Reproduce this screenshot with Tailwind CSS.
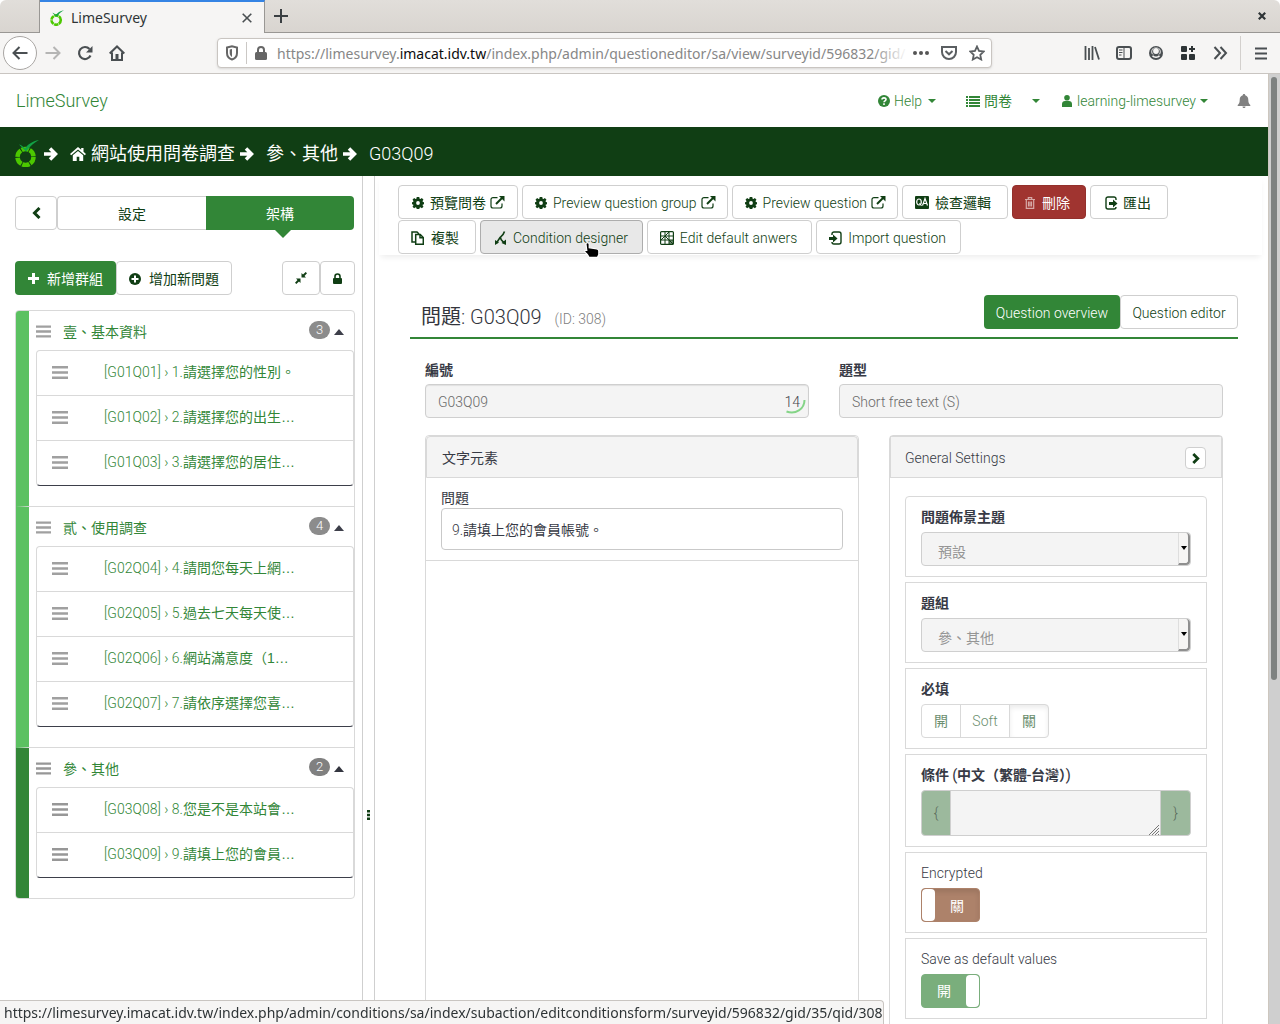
<!DOCTYPE html>
<html lang="zh-Hant">
<head>
<meta charset="utf-8">
<title>LimeSurvey</title>
<script src="https://cdn.jsdelivr.net/npm/@tailwindcss/browser@4"></script>
</head>
<body class="bg-white font-['Roboto_Light','Roboto','Noto_Sans_CJK_TC',sans-serif] text-sm leading-5 text-[#373a45]">

<svg class="hidden" aria-hidden="true">
  <symbol id="lime" viewBox="0 0 24 27">
    <circle cx="10.500" cy="17" r="8" fill="none" stroke="#4cc800" stroke-width="4.500" stroke-dasharray="7.400 0.970"/>
    <path d="M4 4.500c2.500.5 4 2 6 4C13 4 17 1.500 24 0c-5 2.500-9 6.500-13 11.500C8.500 9 6.500 7 4 4.500z" fill="#12a346"/>
  </symbol>
  <symbol id="arrow" viewBox="0 0 14 14"><path d="M0 7h11M6 1.500 11.500 7 6 12.500" fill="none" stroke="currentColor" stroke-width="3.500"/></symbol>
  <symbol id="home" viewBox="0 0 16 14"><path d="M8 0 0 7l1.200 1.300L8 2.500l6.800 5.800L16 7l-2.500-2.200V1h-2.300v1.800zM2.800 8.300V14h3.900V9.800h2.600V14h3.900V8.300L8 4z" fill="currentColor"/></symbol>
  <symbol id="bars" viewBox="0 0 16 13"><path d="M0 0h16v2.500H0zM0 5.200h16v2.600H0zM0 10.500h16V13H0z" fill="currentColor"/></symbol>
  <symbol id="gear" viewBox="0 0 14 14"><path fill="currentColor" fill-rule="evenodd" d="M5.500 0h3l.4 1.900 1 .4L11.500 1.200l1.900 1.900-1.100 1.600.4 1 1.300.3v2.400l-1.300.3-.4 1 1.100 1.600-1.900 1.900-1.600-1.100-1 .4-.4 1.500h-3l-.4-1.500-1-.4-1.600 1.100-1.900-1.900 1.100-1.600-.4-1L0 8.400V6l1.300-.3.4-1L.6 3.100l1.900-1.900 1.600 1.100 1-.4zM7 4.800a2.200 2.200 0 1 0 0 4.400 2.200 2.200 0 0 0 0-4.400z"/></symbol>
  <symbol id="ext" viewBox="0 0 15 13"><path d="M7.500 1.600H3a2 2 0 0 0-2 2V10a2 2 0 0 0 2 2h7a2 2 0 0 0 2-2V7.500" fill="none" stroke="currentColor" stroke-width="1.200"/><path d="M6 8 12.500 1.500" stroke="currentColor" stroke-width="2"/><path d="M9 0h5.500v5.500z" fill="currentColor"/></symbol>
  <symbol id="tri" viewBox="0 0 8 4"><path d="M0 0h8L4 4z" fill="currentColor"/></symbol>
</svg>

<div class="flex h-screen flex-col overflow-hidden">
  <!-- browser tab strip -->
  <div class="flex h-[33px] shrink-0 rounded-t-md border-b border-[#999794] bg-linear-to-b from-[#e1deda] to-[#d9d5d0] font-['Noto_Sans',sans-serif] text-sm text-[#2e3436]">
    <div class="w-10 border-r border-[#999794]"></div>
    <div class="-mb-px flex w-[225px] items-center border-t-2 border-r border-t-[#3584e4] border-r-[#999794] bg-[#f6f5f4] pr-3 pl-[10px]">
      <svg class="h-4 w-[14px]"><use href="#lime"/></svg>
      <span class="ml-[7px]">LimeSurvey</span>
      <button class="ml-auto" aria-label="關閉分頁"><svg class="size-[10px]" viewBox="0 0 10 10"><path d="m.7.7 8.600 8.600M9.300.7.7 9.300" stroke="#4a4f52" stroke-width="1.600"/></svg></button>
    </div>
    <button class="ml-[9px]" aria-label="新分頁"><svg class="size-[14px]" viewBox="0 0 14 14"><path d="M7 0v14M0 7h14" stroke="#3a3f42" stroke-width="2"/></svg></button>
    <button class="mr-[14px] ml-auto" aria-label="關閉"><svg class="size-2" viewBox="0 0 8 8"><path d="m.8.8 6.400 6.400M7.200.8.8 7.200" stroke="#2e3436" stroke-width="2.200"/></svg></button>
  </div>
  <!-- browser toolbar -->
  <div class="flex h-[41px] shrink-0 items-center border-b border-[#c9c5c1] bg-[#f6f5f4] pr-[13px] pl-[3px] text-[#4a4f52]">
    <button class="flex size-[34px] items-center justify-center rounded-full border border-[#a9a6a3] bg-white" aria-label="上一頁"><svg class="h-[14px] w-4" viewBox="0 0 16 14"><path d="M15.500 7H1.500M7.500 1l-6 6 6 6" fill="none" stroke="currentColor" stroke-width="2"/></svg></button>
    <button class="ml-2 text-[#b5b5b4]" aria-label="下一頁"><svg class="h-[14px] w-4" viewBox="0 0 16 14"><path d="M.5 7h14M8.500 1l6 6-6 6" fill="none" stroke="currentColor" stroke-width="2"/></svg></button>
    <button class="ml-4" aria-label="重新載入"><svg class="size-4" viewBox="0 0 16 16"><path d="M13.500 10.500A6 6 0 1 1 12.500 4" fill="none" stroke="currentColor" stroke-width="2.200"/><path d="M15.500 1v6.500H9z" fill="currentColor"/></svg></button>
    <button class="ml-4" aria-label="首頁"><svg class="size-4" viewBox="0 0 16 16"><path d="m.7 8.500 7.300-7 7.300 7M3 7.500V15h10V7.500" fill="none" stroke="currentColor" stroke-width="2"/><path d="M6.500 9h3v6h-3z" fill="currentColor"/></svg></button>
    <div class="ml-[92px] flex h-[30px] min-w-0 flex-1 items-center rounded border border-[#c9c5c1] bg-white pr-[6px] pl-2 shadow-sm">
      <svg class="h-4 w-3 shrink-0" viewBox="0 0 12 16"><path d="M1 2.500 6 1.200l5 1.300V8c0 3-2 5.500-5 6.500C3 13.500 1 11 1 8z" fill="none" stroke="#666" stroke-width="2"/><path d="M6 4v8C4.500 11 3.700 9.800 3.700 8V4.600z" fill="#666"/></svg>
      <span class="ml-2 h-[22px] w-px shrink-0 bg-[#cbc8c5]"></span>
      <svg class="ml-2 h-[14px] w-3 shrink-0" viewBox="0 0 12 14"><path d="M3 7V4a3 3 0 0 1 6 0v3" fill="none" stroke="#666" stroke-width="2"/><rect y="6" width="12" height="8" rx="1.500" fill="#666"/></svg>
      <div role="textbox" aria-label="網址" class="relative ml-[10px] min-w-0 flex-1 pt-px font-['Noto_Sans',sans-serif] whitespace-nowrap text-[#878787]">https://limesurvey.<span class="text-[#0c0c0d]">imacat.idv.tw</span>/index.php/admin/questioneditor/sa/view/surveyid/596832/gid/<span class="absolute inset-y-0 -right-1 w-9 bg-linear-to-r from-white/0 to-white"></span></div>
      <svg class="ml-2 h-4 w-[18px] shrink-0" viewBox="0 0 18 16" fill="#555"><circle cx="3" cy="8" r="2"/><circle cx="9" cy="8" r="2"/><circle cx="15" cy="8" r="2"/></svg>
      <svg class="ml-[11px] h-[14px] w-4 shrink-0" viewBox="0 0 16 14"><path d="M1 1h14v5a7 7 0 0 1-14 0z" fill="none" stroke="#5b5f62" stroke-width="2"/><path d="M4.500 5 8 8.300 11.500 5" fill="none" stroke="#5b5f62" stroke-width="2"/></svg>
      <svg class="ml-3 size-4 shrink-0" viewBox="0 0 16 16"><path d="m8 1.500 2 4.400 4.800.6-3.500 3.300.9 4.700L8 12.200l-4.200 2.300.9-4.700L1.200 6.500 6 5.900z" fill="none" stroke="#5b5f62" stroke-width="1.800"/></svg>
    </div>
    <div class="ml-[92px] flex shrink-0 items-center gap-4">
      <svg class="size-4" viewBox="0 0 16 16"><path d="M1.500 1v14M5 3v12M8.500 1v14M11 2l4 12.500" stroke="currentColor" stroke-width="1.800"/></svg>
      <svg class="size-4" viewBox="0 0 16 16"><rect x="1" y="2" width="14" height="12" rx="2" fill="none" stroke="currentColor" stroke-width="2"/><path d="M8 2v12M3 5h3.500M3 7.500h3.500M3 10h2.500" stroke="currentColor"/></svg>
      <svg class="size-4" viewBox="0 0 16 16"><circle cx="8" cy="8" r="7" fill="currentColor"/><path d="M3.500 8.500C2.500 4.500 5 2.500 8 2.500s5.500 2 4.500 6L11 9.500H5z" fill="#f6f5f4"/><circle cx="8" cy="6.500" r="3.800" fill="currentColor"/><circle cx="8" cy="6" r="2.900" fill="#f6f5f4"/><path d="M4.500 10.800c1.500 2 5.500 2 7 0" fill="none" stroke="#f6f5f4" stroke-width="1.600"/></svg>
      <svg class="size-4" viewBox="0 0 16 16" fill="#2e3436"><rect x="1" y="1" width="6" height="6" rx="1"/><rect x="1" y="9" width="6" height="6" rx="1"/><rect x="9" y="9" width="6" height="6" rx="1"/><path d="M11 1h2v2h2v2h-2v2h-2V5H9V3h2z"/></svg>
      <svg class="size-4" viewBox="0 0 16 16"><path d="m2.500 2 5.500 6-5.500 6M8.500 2l5.500 6-5.500 6" fill="none" stroke="currentColor" stroke-width="2"/></svg>
    </div>
    <span class="ml-3 h-[34px] w-px bg-[#d3d0cd]"></span>
    <button class="ml-[14px]" aria-label="選單"><svg class="h-[13px] w-3" viewBox="0 0 12 13"><path d="M0 1.500h12M0 6.500h12M0 11.500h12" stroke="#4a4f52" stroke-width="2"/></svg></button>
  </div>

  <!-- page viewport -->
  <div class="flex min-h-0 flex-1">
    <div class="flex min-w-0 flex-1 flex-col overflow-hidden">
      <header class="flex h-[53px] shrink-0 items-center pt-px pr-[17px] pl-4 text-[#328637]">
        <a href="#" class="text-lg">LimeSurvey</a>
        <nav class="ml-auto flex items-center">
          <a href="#" class="flex items-center"><svg class="mr-1 size-3" viewBox="0 0 12 12"><circle cx="6" cy="6" r="6" fill="currentColor"/><path d="M4 4.600C4 2.300 8 2.300 8 4.500 8 6 6 5.700 6 7.300M6 8.300v1.600" fill="none" stroke="#fff" stroke-width="1.600"/></svg>Help<svg class="ml-[6px] h-1 w-2"><use href="#tri"/></svg></a>
          <a href="#" class="ml-[30px] flex items-center"><svg class="mr-1 h-[11px] w-[14px]" viewBox="0 0 14 11"><path d="M0 1h2M3 1h11M0 4h2M3 4h11M0 7h2M3 7h11M0 10h2M3 10h11" stroke="currentColor" stroke-width="1.800"/></svg>問卷</a>
          <a href="#" class="ml-5" aria-label="問卷選單"><svg class="h-1 w-2"><use href="#tri"/></svg></a>
          <a href="#" class="ml-[22px] flex items-center"><svg class="mr-[5px] h-3 w-[10px]" viewBox="0 0 10 12"><circle cx="5" cy="2.800" r="2.800" fill="currentColor"/><path d="M0 12V9c0-2 1.300-3 3-3h4c1.700 0 3 1 3 3v3z" fill="currentColor"/></svg>learning-limesurvey<svg class="ml-1 h-1 w-2"><use href="#tri"/></svg></a>
          <a href="#" class="ml-[29px] text-[#808080]" aria-label="通知"><svg class="h-[14px] w-[14px]" viewBox="0 0 14 14"><path d="M7 0c.8 0 1.200.5 1.200 1.200C10.400 1.800 11.300 3.500 11.300 6c0 3 1 4 2 5v1H.7v-1c1-1 2-2 2-5 0-2.500.9-4.200 3.100-4.800C5.800.5 6.200 0 7 0zM5.500 12.500h3c0 2-3 2-3 0z" fill="currentColor"/></svg></a>
        </nav>
      </header>

      <nav class="flex h-[49px] shrink-0 items-center bg-[#103e14] pt-1 pl-[15px] text-lg text-white">
        <svg class="h-[27px] w-6"><use href="#lime"/></svg>
        <svg class="ml-[5px] size-[14px]"><use href="#arrow"/></svg>
        <a href="#" class="ml-3 flex items-center"><svg class="mr-[5px] h-[14px] w-4"><use href="#home"/></svg>網站使用問卷調查</a>
        <svg class="ml-[5px] size-[14px]"><use href="#arrow"/></svg>
        <a href="#" class="ml-3">參、其他</a>
        <svg class="ml-[5px] size-[14px]"><use href="#arrow"/></svg>
        <span class="ml-3">G03Q09</span>
      </nav>

      <div class="flex min-h-0 flex-1">
        <!-- survey structure sidebar -->
        <aside class="w-[362px] shrink-0 overflow-hidden pt-5 pr-[7px] pl-[15px] text-[#103e14]">
          <div class="flex h-[34px]">
            <button class="flex w-[42px] items-center justify-center rounded border border-[#cfcfcf]" aria-label="返回"><svg class="h-3 w-[9px]" viewBox="0 0 9 12"><path d="M7.500 1 2.500 6l5 5" fill="none" stroke="currentColor" stroke-width="3"/></svg></button>
            <button class="flex-1 rounded-l border border-r-0 border-[#cfcfcf] pt-px">設定</button>
            <button class="relative mr-px flex-1 rounded-r bg-[#328637] pt-px text-white">架構<svg class="absolute top-full left-[69px] h-2 w-4" viewBox="0 0 16 8"><path d="M0 0h16L8 8z" fill="#328637"/></svg></button>
          </div>
          <div class="mt-[31px] flex h-[34px]">
            <button class="flex w-[101px] items-center justify-center rounded bg-[#328637] pt-px text-white"><svg class="mr-2 size-[11px]" viewBox="0 0 11 11"><path d="M5.500 0v11M0 5.500h11" stroke="currentColor" stroke-width="3"/></svg>新增群組</button>
            <button class="flex w-[116px] items-center justify-center rounded border border-[#cfcfcf] pt-px"><svg class="mr-2 size-3" viewBox="0 0 12 12"><circle cx="6" cy="6" r="6" fill="currentColor"/><path d="M6 2.500v7M2.500 6h7" stroke="#fff" stroke-width="2"/></svg>增加新問題</button>
            <button class="ml-auto flex w-[38px] items-center justify-center rounded border border-[#cfcfcf]" aria-label="收合全部"><svg class="size-3" viewBox="0 0 12 12" fill="currentColor"><path d="M6.500 1v4.500H11L9.500 4 12 1.300 10.700 0 8 2.500zM5.500 11V6.500H1L2.500 8 0 10.700 1.300 12 4 9.500z"/></svg></button>
            <button class="flex w-[35px] items-center justify-center rounded border border-[#cfcfcf]" aria-label="鎖定"><svg class="h-[11px] w-[9px]" viewBox="0 0 9 11"><path d="M2 6V3.500a2.500 2.500 0 0 1 5 0V6" fill="none" stroke="currentColor" stroke-width="1.600"/><rect y="5" width="9" height="6" rx="1" fill="currentColor"/></svg></button>
          </div>

          <ul class="mt-[15px] divide-y divide-[#d9d9d9] overflow-hidden rounded border border-[#d9d9d9] text-[#328637]">
            <li class="border-l-[13px] border-l-[#5bc161] pb-5 pl-[7px]">
              <div class="flex h-[39px] items-center pt-[2px] pr-[10px]"><svg class="h-[13px] w-[15px] text-[#a0a0a0]"><use href="#bars"/></svg><a href="#" class="ml-3">壹、基本資料</a><span class="mb-1 ml-auto h-[18px] w-[21px] rounded-full bg-[#8c8c8c] text-center text-[13px] leading-[18px] text-white">3</span><svg class="ml-1 h-[6px] w-[10px] text-[#3d3f4a]" viewBox="0 0 10 6"><path d="M0 6h10L5 0z" fill="currentColor"/></svg></div>
              <ul class="divide-y divide-[#d9d9d9] rounded border border-[#d9d9d9] border-b-[#3d3f4a]">
                <li class="flex h-[45px] items-center pb-[2px] pl-[15px]"><svg class="h-[13px] w-4 text-[#a0a0a0]"><use href="#bars"/></svg><a href="#" class="ml-9">[G01Q01] › 1.<span class="font-['Liberation_Sans','Noto_Sans_CJK_TC',sans-serif]">請選擇您的性別。</span></a></li>
                <li class="flex h-[45px] items-center pb-[2px] pl-[15px]"><svg class="h-[13px] w-4 text-[#a0a0a0]"><use href="#bars"/></svg><a href="#" class="ml-9">[G01Q02] › 2.<span class="font-['Liberation_Sans','Noto_Sans_CJK_TC',sans-serif]">請選擇您的出生…</span></a></li>
                <li class="flex h-11 items-center pb-[2px] pl-[15px]"><svg class="h-[13px] w-4 text-[#a0a0a0]"><use href="#bars"/></svg><a href="#" class="ml-9">[G01Q03] › 3.<span class="font-['Liberation_Sans','Noto_Sans_CJK_TC',sans-serif]">請選擇您的居住…</span></a></li>
              </ul>
            </li>
            <li class="border-l-[13px] border-l-[#5bc161] pb-5 pl-[7px]">
              <div class="flex h-[39px] items-center pt-[2px] pr-[10px]"><svg class="h-[13px] w-[15px] text-[#a0a0a0]"><use href="#bars"/></svg><a href="#" class="ml-3">貳、使用調查</a><span class="mb-1 ml-auto h-[18px] w-[21px] rounded-full bg-[#8c8c8c] text-center text-[13px] leading-[18px] text-white">4</span><svg class="ml-1 h-[6px] w-[10px] text-[#3d3f4a]" viewBox="0 0 10 6"><path d="M0 6h10L5 0z" fill="currentColor"/></svg></div>
              <ul class="divide-y divide-[#d9d9d9] rounded border border-[#d9d9d9] border-b-[#3d3f4a]">
                <li class="flex h-[45px] items-center pb-[2px] pl-[15px]"><svg class="h-[13px] w-4 text-[#a0a0a0]"><use href="#bars"/></svg><a href="#" class="ml-9">[G02Q04] › 4.<span class="font-['Liberation_Sans','Noto_Sans_CJK_TC',sans-serif]">請問您每天上網…</span></a></li>
                <li class="flex h-[45px] items-center pb-[2px] pl-[15px]"><svg class="h-[13px] w-4 text-[#a0a0a0]"><use href="#bars"/></svg><a href="#" class="ml-9">[G02Q05] › 5.<span class="font-['Liberation_Sans','Noto_Sans_CJK_TC',sans-serif]">過去七天每天使…</span></a></li>
                <li class="flex h-[45px] items-center pb-[2px] pl-[15px]"><svg class="h-[13px] w-4 text-[#a0a0a0]"><use href="#bars"/></svg><a href="#" class="ml-9">[G02Q06] › 6.<span class="font-['Liberation_Sans','Noto_Sans_CJK_TC',sans-serif]">網站滿意度（1…</span></a></li>
                <li class="flex h-11 items-center pb-[2px] pl-[15px]"><svg class="h-[13px] w-4 text-[#a0a0a0]"><use href="#bars"/></svg><a href="#" class="ml-9">[G02Q07] › 7.<span class="font-['Liberation_Sans','Noto_Sans_CJK_TC',sans-serif]">請依序選擇您喜…</span></a></li>
              </ul>
            </li>
            <li class="border-l-[13px] border-l-[#328637] pb-5 pl-[7px]">
              <div class="flex h-[39px] items-center pt-[2px] pr-[10px]"><svg class="h-[13px] w-[15px] text-[#979797]"><use href="#bars"/></svg><a href="#" class="ml-3">參、其他</a><span class="mb-1 ml-auto h-[18px] w-[21px] rounded-full bg-[#808080] text-center text-[13px] leading-[18px] text-white">2</span><svg class="ml-1 h-[6px] w-[10px] text-[#33353f]" viewBox="0 0 10 6"><path d="M0 6h10L5 0z" fill="currentColor"/></svg></div>
              <ul class="divide-y divide-[#d9d9d9] rounded border border-[#d9d9d9] border-b-[#3d3f4a]">
                <li class="flex h-[45px] items-center pb-[2px] pl-[15px]"><svg class="h-[13px] w-4 text-[#979797]"><use href="#bars"/></svg><a href="#" class="ml-9">[G03Q08] › 8.<span class="font-['Liberation_Sans','Noto_Sans_CJK_TC',sans-serif]">您是不是本站會…</span></a></li>
                <li class="flex h-11 items-center pb-[2px] pl-[15px]"><svg class="h-[13px] w-4 text-[#979797]"><use href="#bars"/></svg><a href="#" class="ml-9">[G03Q09] › 9.<span class="font-['Liberation_Sans','Noto_Sans_CJK_TC',sans-serif]">請填上您的會員…</span></a></li>
              </ul>
            </li>
          </ul>
        </aside>
        <!-- resize handle -->
        <div class="flex w-[13px] shrink-0 justify-center border-x border-[#cfcfcf] pt-[634px] text-[#103e14]"><svg class="h-[10px] w-[3px]" viewBox="0 0 3 10"><path d="M0 0h3v2.500H0zM0 3.700h3v2.500H0zM0 7.500h3V10H0z" fill="currentColor"/></svg></div>

        <main class="min-w-0 flex-1 overflow-hidden">
          <div class="relative mr-[6px] ml-1 flex flex-wrap gap-x-1 gap-y-px pt-[9px] pr-20 pb-px pl-[19px] text-[#103e14] shadow-[0_4px_6px_-2px_rgba(0,0,0,0.08)]">
            <button class="flex h-[34px] items-center rounded border border-[#cfcfcf] bg-white px-3 pt-px"><svg class="mr-[5px] size-[14px] p-px"><use href="#gear"/></svg>預覽問卷<svg class="ml-1 h-[13px] w-[15px]"><use href="#ext"/></svg></button>
            <button class="flex h-[34px] items-center rounded border border-[#cfcfcf] bg-white pt-px pr-[11px] pl-[11px]"><svg class="mr-[5px] size-[14px] p-px"><use href="#gear"/></svg>Preview question group<svg class="ml-1 h-[13px] w-[15px]"><use href="#ext"/></svg></button>
            <button class="flex h-[34px] items-center rounded border border-[#cfcfcf] bg-white pt-px pr-[11px] pl-[11px]"><svg class="mr-[5px] size-[14px] p-px"><use href="#gear"/></svg>Preview question<svg class="ml-1 h-[13px] w-[15px]"><use href="#ext"/></svg></button>
            <button class="flex h-[34px] items-center rounded border border-[#cfcfcf] bg-white pt-px pr-4 pl-3"><svg class="mr-[6px] h-[13px] w-[14px]" viewBox="0 0 14 13"><rect width="14" height="13" rx="1" fill="currentColor"/><path d="m7.500 9.500 2.500-7 2.500 7M8.500 7.500h3" fill="none" stroke="#fff" stroke-width="1.200"/><ellipse cx="4" cy="6" rx="2.300" ry="3" fill="none" stroke="#fff" stroke-width="1.200"/><path d="m4.500 7 2 3" stroke="#fff"/></svg>檢查邏輯</button>
            <button class="flex h-[34px] items-center rounded border border-[#93302c] bg-[#a03430] pt-px pr-[15px] pl-3 text-white"><svg class="mr-[7px] h-3 w-[10px] text-[#d7a9a7]" viewBox="0 0 10 12"><path d="M0 2.500h10M3.300 2V.6h3.400V2M1.300 3v8.400h7.400V3M3.500 4.500v5M5 4.500v5M6.500 4.500v5" fill="none" stroke="currentColor" stroke-width="1.200"/></svg>刪除</button>
            <button class="flex h-[34px] items-center rounded border border-[#cfcfcf] bg-white pt-px pr-4 pl-[14px]"><svg class="mr-[5px] h-[14px] w-[13px]" viewBox="0 0 13 14"><path d="M11 4V3a2 2 0 0 0-2-2H3a2 2 0 0 0-2 2v8a2 2 0 0 0 2 2h6a2 2 0 0 0 2-2" fill="none" stroke="currentColor" stroke-width="1.400"/><path d="M4 6h4V3.500L12.500 7.500 8 11.500V9H4z" fill="currentColor"/></svg>匯出</button>
            <button class="flex h-[34px] items-center rounded border border-[#cfcfcf] bg-white pt-px pr-4 pl-3"><svg class="mr-[7px] h-[14px] w-[13px]" viewBox="0 0 13 14"><path d="M4 11H1V1h5l2 2" fill="none" stroke="currentColor" stroke-width="1.500"/><path d="M4.700 3.500h4.600L12.300 6.500v6.800H4.700zM9 3.500v3.300h3.300" fill="none" stroke="currentColor" stroke-width="1.500"/></svg>複製</button>
            <button class="flex h-[34px] items-center rounded border border-[#adadad] bg-[#e8e8e8] pt-px pr-[14px] pl-[14px]"><svg class="mr-[7px] h-[14px] w-[11px]" viewBox="0 0 11 14"><path d="M9.500.5C8.500 4 7 5 5 6.500L1.500 12M5.500 6.500c0 2.500 2 3.500 3.500 5" fill="none" stroke="currentColor" stroke-width="1.600"/><path d="M0 9v5l4-2.500zM11 8.500V14l-4.500-2z" fill="currentColor"/></svg>Condition designer</button>
            <button class="flex h-[34px] items-center rounded border border-[#cfcfcf] bg-white pt-px pr-[14px] pl-3"><svg class="mr-[6px] size-[14px]" viewBox="0 0 14 14"><rect x=".6" y=".6" width="12.800" height="12.800" rx="1" fill="none" stroke="currentColor" stroke-width="1.200"/><path d="M5 1v12M9 1v12M1 5h12M1 9h12M1 9l8-8M5 5l8 8" stroke="currentColor"/><path d="M9 9h4v4H9z" fill="currentColor" opacity=".6"/></svg>Edit default anwers</button>
            <button class="flex h-[34px] items-center rounded border border-[#cfcfcf] bg-white pt-px pr-[14px] pl-3"><svg class="mr-[6px] h-[14px] w-[13px]" viewBox="0 0 13 14"><path d="M3 4V3a2 2 0 0 1 2-2h5a2 2 0 0 1 2 2v8a2 2 0 0 1-2 2H5a2 2 0 0 1-2-2" fill="none" stroke="currentColor" stroke-width="1.400"/><path d="M0 6h4V3.500L8.500 7.500 4 11.500V9H0z" fill="currentColor"/></svg>Import question</button>
            <!-- mouse pointer -->
            <svg class="absolute top-[66px] left-[205px] h-4 w-4" viewBox="0 0 16 16"><path d="M3.500.7c1.200 0 1.700.7 1.700 1.700v3.400l7.600 1c1.300.3 2 1 2 2.200v3.500l-1.300 2.800H5L3.500 12.500.8 10V8.500h2L2 2.400C2 1.400 2.400.7 3.500.7z" fill="#000" stroke="#fff" stroke-width="1.200"/></svg>
          </div>

          <div class="mr-[30px] ml-[35px] pt-10">
            <div class="flex h-11 items-start border-b-2 border-[#328637] pl-[11px]">
              <h1 class="pt-3 text-xl leading-5 text-[#33353c]">問題: G03Q09 <small class="ml-2 text-sm text-[#808080]">(ID: 308)</small></h1>
              <div class="ml-auto flex">
                <button class="h-[34px] w-[136px] rounded bg-[#328637] pt-px text-white">Question overview</button>
                <button class="h-[34px] w-[118px] rounded border border-[#cfcfcf] pt-px text-[#103e14]">Question editor</button>
              </div>
            </div>

            <div class="grid grid-cols-2 gap-[30px] px-[15px] pt-[21px]">
              <div class="relative">
                <label for="code" class="block font-bold">編號</label>
                <input id="code" readonly value="G03Q09" class="mt-1 h-[34px] w-full rounded border border-[#cfcfcf] bg-[#f4f4f4] px-3 pt-px text-[#6a6a6a] shadow-[inset_0_1px_1px_rgba(0,0,0,0.08)]">
                <span class="absolute right-[9px] bottom-[6px] text-[#44454c]">14</span>
                <svg class="absolute right-[2px] bottom-[2px] size-[22px]" viewBox="0 0 22 22"><path d="M19.500 6c0 9-9 15-18 11.500" fill="none" stroke="#84d487" stroke-width="2"/></svg>
              </div>
              <div>
                <label for="qtype" class="block font-bold">題型</label>
                <input id="qtype" readonly value="Short free text (S)" class="mt-1 h-[34px] w-full rounded border border-[#cfcfcf] bg-[#f4f4f4] px-3 pt-px text-[#6a6a6a]">
              </div>
            </div>

            <div class="flex gap-[30px] px-[15px] pt-[17px]">
              <section class="h-[700px] flex-1 rounded border border-[#d9d9d9]">
                <h2 class="flex h-[42px] items-center rounded-t-sm border border-[#d9d9d9] bg-[#f4f4f4] px-[15px] pt-[2px]">文字元素</h2>
                <div class="h-[83px] border-b border-[#d9d9d9] px-[15px] pt-[10px]">
                  <div class="leading-5">問題</div>
                  <div class="flex h-[42px] items-center rounded border border-[#c9c9c9] px-[10px] pt-px">9.請填上您的會員帳號。</div>
                </div>
              </section>
              <section class="h-[700px] w-[334px] rounded border border-[#d9d9d9]">
                <h2 class="flex h-[42px] items-center border border-[#d9d9d9] bg-[#f4f4f4] pt-[2px] pr-[15px] pl-[14px]">General Settings
                  <button class="ml-auto flex h-[22px] w-[21px] items-center justify-center rounded-sm border border-[#cfcfcf] bg-white text-[#103e14]" aria-label="收合"><svg class="h-[11px] w-2" viewBox="0 0 8 11"><path d="m1.300 1 4.500 4.500L1.300 10" fill="none" stroke="currentColor" stroke-width="2.800"/></svg></button></h2>
                <div class="flex flex-col gap-[5px] px-[15px] pt-[18px]">
                  <div class="h-[81px] rounded-t border border-[#d9d9d9] px-[15px] pt-[10px]">
                    <label for="theme" class="block font-bold">問題佈景主題</label>
                    <div class="relative mt-[5px]">
                      <select id="theme" disabled class="h-[34px] w-full appearance-none rounded border border-[#cfcfcf] bg-[#f4f4f4] px-4 pt-[6px] text-[#959595]"><option>預設</option></select>
                      <span class="pointer-events-none absolute inset-y-px right-px flex w-3 items-center justify-center rounded-r-sm border-r-2 border-b-2 border-l border-r-[#8f8f8f] border-b-[#8f8f8f] border-l-[#dedede] bg-[#f6f5f4] text-black"><svg class="h-1 w-[6px]" viewBox="0 0 8 4" preserveAspectRatio="none"><path d="M0 0h8L4 4z"/></svg></span>
                    </div>
                  </div>
                  <div class="h-[81px] border border-[#d9d9d9] px-[15px] pt-[10px]">
                    <label for="group" class="block font-bold">題組</label>
                    <div class="relative mt-[5px]">
                      <select id="group" disabled class="h-[34px] w-full appearance-none rounded border border-[#cfcfcf] bg-[#f4f4f4] px-4 pt-[6px] text-[#959595]"><option>參、其他</option></select>
                      <span class="pointer-events-none absolute inset-y-px right-px flex w-3 items-center justify-center rounded-r-sm border-r-2 border-b-2 border-l border-r-[#8f8f8f] border-b-[#8f8f8f] border-l-[#dedede] bg-[#f6f5f4] text-black"><svg class="h-1 w-[6px]" viewBox="0 0 8 4" preserveAspectRatio="none"><path d="M0 0h8L4 4z"/></svg></span>
                    </div>
                  </div>
                  <fieldset class="h-[81px] border border-[#d9d9d9] px-[15px] pt-[10px]">
                    <div class="font-bold">必填</div>
                    <div class="relative mt-[5px] flex h-[34px] w-[128px] divide-x divide-[#d9d9d9] overflow-hidden rounded border border-[#d9d9d9] text-[#6c8f6f]">
                      <label class="flex flex-1 items-center justify-center"><input type="radio" name="mandatory" class="sr-only">開</label>
                      <label class="flex w-[49px] items-center justify-center"><input type="radio" name="mandatory" class="sr-only">Soft</label>
                      <label class="flex flex-1 items-center justify-center shadow-[inset_0_3px_5px_rgba(0,0,0,0.08)]"><input type="radio" name="mandatory" class="sr-only" checked>關</label>
                    </div>
                  </fieldset>
                  <div class="h-[93px] border border-[#d9d9d9] px-[15px] pt-[10px]">
                    <label for="cond" class="block font-bold">條件 (中文（繁體-台灣）)</label>
                    <div class="mt-[5px] flex h-[46px] overflow-hidden rounded border border-[#cfcfcf] bg-[#9cb99d] text-[#5a6b5b]">
                      <span class="flex w-7 items-center justify-center">{</span>
                      <div class="relative flex flex-1">
                        <textarea id="cond" readonly class="w-full resize-none border-x border-[#cfcfcf] bg-[#f4f4f4]"></textarea>
                        <svg class="absolute right-[2px] bottom-0 size-[10px]" viewBox="0 0 10 10"><path d="M0 10 10 0M3 10l7-7M6 10l4-4M9 10l1-1" stroke="#777"/></svg>
                      </div>
                      <span class="flex w-[29px] items-center justify-center">}</span>
                    </div>
                  </div>
                  <div class="h-[81px] border border-[#d9d9d9] px-[15px] pt-[10px]">
                    <label for="enc" class="block">Encrypted</label>
                    <label class="relative mt-[5px] flex h-[34px] w-[59px] overflow-hidden rounded border border-[#ad826a] bg-[#ad826a] text-white shadow-[inset_0_3px_5px_rgba(0,0,0,0.1)]"><input id="enc" type="checkbox" class="sr-only"><span class="w-[13px] rounded-sm bg-white"></span><span class="flex flex-1 items-center justify-center pt-px">關</span></label>
                  </div>
                  <div class="h-[81px] border border-[#d9d9d9] px-[15px] pt-[10px]">
                    <label for="def" class="block">Save as default values</label>
                    <label class="relative mt-[5px] flex h-[34px] w-[59px] overflow-hidden rounded border border-[#7aae7c] bg-[#7aae7c] text-white"><input id="def" type="checkbox" class="sr-only" checked><span class="flex flex-1 items-center justify-center">開</span><span class="w-[13px] rounded-sm bg-white"></span></label>
                  </div>
                </div>
              </section>
            </div>
          </div>
        </main>
      </div>
    </div>
    <!-- page scrollbar -->
    <div class="w-3 shrink-0 border-l border-[#cdc7bf] bg-[#cfcfcf] pt-[3px] pl-[2px]"><div class="h-[603px] w-[6px] rounded-full bg-[#7e8281]"></div></div>
  </div>
</div>
<!-- link target status bar -->
<div class="fixed bottom-0 left-0 h-6 rounded-tr border-t border-r border-[#c9c5c1] bg-[#f6f5f4] pr-px pl-1 font-['Noto_Sans',sans-serif] text-sm leading-6 whitespace-nowrap text-[#2e3436]">https://limesurvey.imacat.idv.tw/index.php/admin/conditions/sa/index/subaction/editconditionsform/surveyid/596832/gid/35/qid/308</div>
</body>
</html>
